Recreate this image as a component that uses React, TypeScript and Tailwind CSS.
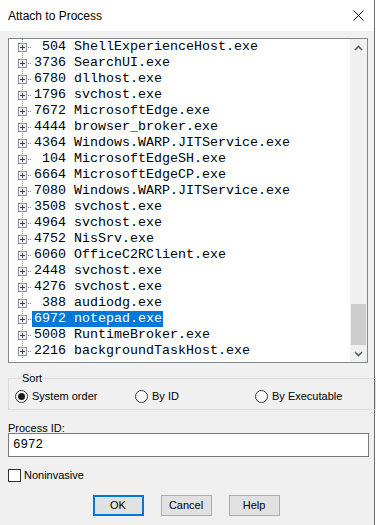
import React from "react";

const rows: [number, string][] = [
  [504, "ShellExperienceHost.exe"],
  [3736, "SearchUI.exe"],
  [6780, "dllhost.exe"],
  [1796, "svchost.exe"],
  [7672, "MicrosoftEdge.exe"],
  [4444, "browser_broker.exe"],
  [4364, "Windows.WARP.JITService.exe"],
  [104, "MicrosoftEdgeSH.exe"],
  [6664, "MicrosoftEdgeCP.exe"],
  [7080, "Windows.WARP.JITService.exe"],
  [3508, "svchost.exe"],
  [4964, "svchost.exe"],
  [4752, "NisSrv.exe"],
  [6060, "OfficeC2RClient.exe"],
  [2448, "svchost.exe"],
  [4276, "svchost.exe"],
  [388, "audiodg.exe"],
  [6972, "notepad.exe"],
  [5008, "RuntimeBroker.exe"],
  [2216, "backgroundTaskHost.exe"],
];

const ui = { fontFamily: '"Liberation Sans", Arial, sans-serif' };
const mono = { fontFamily: '"Liberation Mono", monospace' };

function TreeGlyph() {
  return (
    <svg width="23" height="16" className="shrink-0 block">
      <line x1="13.5" y1="0" x2="13.5" y2="16" stroke="#8a8a8a" strokeDasharray="1 1" />
      <rect x="9.5" y="4.5" width="8" height="8" fill="#f7f7f7" stroke="#8e8f8f" />
      <line x1="11" y1="8.5" x2="16" y2="8.5" stroke="#203f74" />
      <line x1="13.5" y1="6" x2="13.5" y2="11" stroke="#203f74" />
      <rect x="19" y="8" width="1" height="1" fill="#8a8a8a" />
      <rect x="21" y="8" width="1" height="1" fill="#8a8a8a" />
    </svg>
  );
}

function Chevron({ up }: { up?: boolean }) {
  return (
    <svg width="9" height="6" viewBox="0 0 9 6">
      <path
        d={up ? "M1 5 L4.5 1.5 L8 5" : "M1 1 L4.5 4.5 L8 1"}
        fill="none"
        stroke="#606060"
        strokeWidth="1.6"
      />
    </svg>
  );
}

function Radio({ checked, label }: { checked?: boolean; label: string }) {
  return (
    <div className="w-[120px] flex items-center gap-[4px]">
      <span className="w-[13px] h-[13px] rounded-full border border-[#333] bg-white flex items-center justify-center">
        {checked && <span className="w-[7px] h-[7px] rounded-full bg-[#1a1a1a]" />}
      </span>
      <span className="text-[11px] leading-[16px] text-black">{label}</span>
    </div>
  );
}

export default function App() {
  return (
    <div className="w-[375px] h-[525px] bg-[#f0f0f0] border-r border-[#6a6a6a] flex flex-col" style={ui}>
      {/* title bar */}
      <div className="h-[31px] bg-white flex items-center justify-between pl-2 pr-[10px] shrink-0">
        <span className="text-[12px] text-black">Attach to Process</span>
        <svg width="11" height="11" viewBox="0 0 11 11">
          <path d="M0.5 0.5 L10.5 10.5 M10.5 0.5 L0.5 10.5" stroke="#111" strokeWidth="1" />
        </svg>
      </div>

      <div className="px-2 flex flex-col">
        {/* process tree */}
        <div className="mt-[7px] w-[360px] h-[325px] border border-[#828790] bg-white flex">
          <div className="flex-1 flex flex-col text-[13.33px] leading-[16px] text-black" style={mono}>
            {rows.map(([id, name]) => {
              const sel = id === 6972;
              return (
                <div key={id + name} className="h-[16px] flex items-center">
                  <TreeGlyph />
                  <span
                    className={
                      "whitespace-pre pl-[2px] pr-[1px] " +
                      (sel ? "bg-[#0078d7] text-white" : "")
                    }
                  >
                    {String(id).padStart(4, " ") + " " + name}
                  </span>
                </div>
              );
            })}
          </div>
          <div className="w-[17px] bg-[#f0f0f0] flex flex-col">
            <div className="h-[17px] flex items-center justify-center">
              <Chevron up />
            </div>
            <div className="flex-1" />
            <div className="h-[41px] mx-[1px] bg-[#cdcdcd]" />
            <div className="h-[17px] flex items-center justify-center">
              <Chevron />
            </div>
          </div>
        </div>

        {/* sort group */}
        <fieldset className="mt-[7px] w-[361px] border border-[#dcdcdc] pl-[6px] pb-[5px] pt-[2px]">
          <legend className="ml-[6px] px-[1px] text-[11px] leading-[16px] text-black">Sort</legend>
          <div className="flex items-center">
            <Radio checked label="System order" />
            <Radio label="By ID" />
            <Radio label="By Executable" />
          </div>
        </fieldset>

        <div className="mt-[13px] text-[11px] leading-[11px] text-black">Process ID:</div>
        <div className="mt-[-1px] w-[361px] h-[24px] border border-[#7a7a7a] bg-white flex items-center pl-[4px]">
          <span className="text-[12.5px] text-black" style={mono}>6972</span>
        </div>

        <div className="mt-[12px] flex items-center gap-[3px]">
          <span className="w-[13px] h-[13px] border border-[#333] bg-white" />
          <span className="text-[11px] leading-[13px] text-black">Noninvasive</span>
        </div>

        <div className="mt-[13px] flex justify-center gap-[17px] pr-[2px]">
          <button className="w-[51px] h-[21px] bg-[#e1e1e1] border-2 border-[#0078d7] text-[11px] text-black">
            OK
          </button>
          <button className="w-[51px] h-[21px] bg-[#e1e1e1] border border-[#adadad] text-[11px] text-black">
            Cancel
          </button>
          <button className="w-[51px] h-[21px] bg-[#e1e1e1] border border-[#adadad] text-[11px] text-black">
            Help
          </button>
        </div>
      </div>
    </div>
  );
}
